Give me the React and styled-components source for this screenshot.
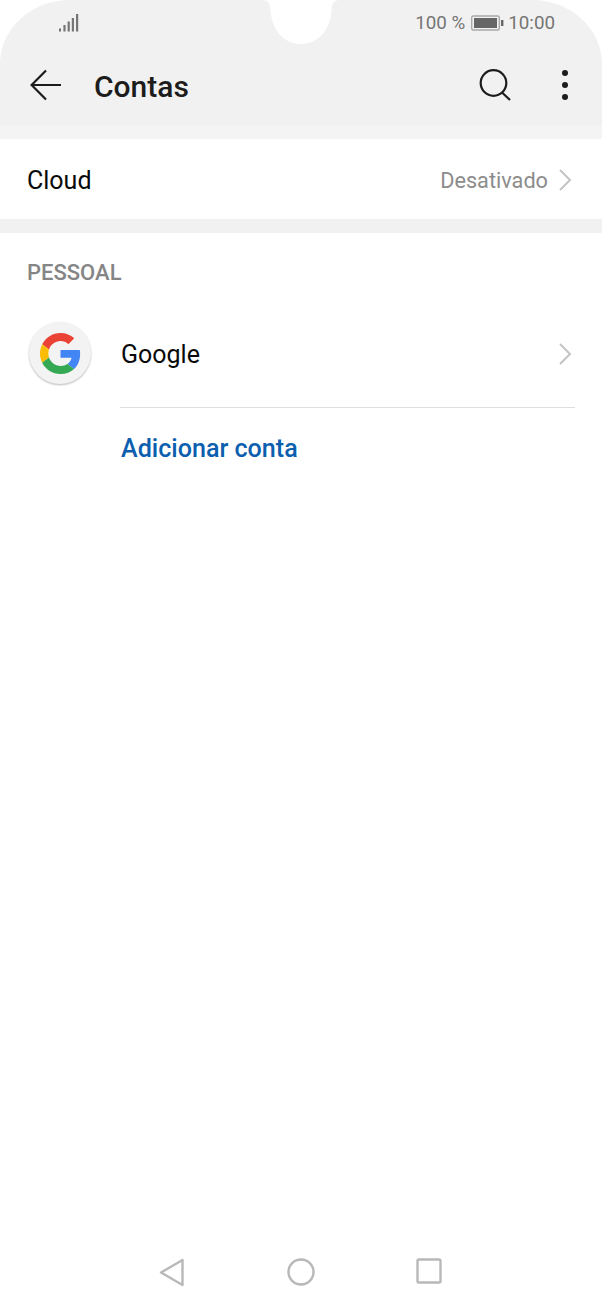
import React from "react";
import styled, { createGlobalStyle } from "styled-components";

const Global = createGlobalStyle`
  html, body { margin: 0; padding: 0; background: #fff; }
  body { font-family: Roboto, "Noto Sans", sans-serif; }
  * { box-sizing: border-box; }
`;
const Screen = styled.div`
  position: relative; width: 602px; height: 1306px; background: #fff;
  display: flex; flex-direction: column; overflow: hidden;
`;
const Header = styled.header`
  background: #f1f1f1; height: 125px; border-radius: 70px 70px 0 0 / 64px 64px 0 0;
  display: flex; flex-direction: column;
`;
const StatusBar = styled.div`
  height: 44px; display: flex; align-items: center; justify-content: space-between;
  padding: 1px 47px 0 59px; color: #757575; font-size: 18.8px;
`;
const StatusRight = styled.div` display: flex; align-items: center; gap: 6px; `;
const Battery = styled.svg` margin-right: -2px; `;
const Notch = styled.svg` position: absolute; left: 262px; top: 0; `;
const Toolbar = styled.div`
  flex: 1; display: flex; align-items: center; padding: 4px 33px 0 30px;
`;
const Title = styled.h1`
  margin: 0 0 0 32px; flex: 1; font-size: 30px; font-weight: 500; color: #1c1c1c; line-height: 1;
`;
const BackIcon = styled.svg` margin-top: -4px; `;
const ToolIcons = styled.div` display: flex; align-items: center; gap: 50px; margin-top: -4px; `;
const Band = styled.div` height: 14px; background: ${p => p.$tone}; `;
const CloudRow = styled.div`
  height: 80px; display: flex; align-items: center; justify-content: space-between;
  padding: 2px 30px 0 27px; font-size: 25px; color: #0a0a0a;
`;
const RowEnd = styled.div` display: flex; align-items: center; gap: 10px; `;
const Muted = styled.span` color: #8c8c8c; font-size: 21.7px; `;
const SectionLabel = styled.div`
  padding: 28px 27px 0; font-size: 22px; font-weight: 500; color: #858585; line-height: 24px;
`;
const AccountRow = styled.div`
  margin-top: 19px; display: grid; grid-template-columns: 120px 1fr;
`;
const Avatar = styled.div`
  width: 62px; height: 62px; margin: 18px 0 0 29px; border-radius: 50%; background: #f3f3f3;
  box-shadow: 0 1px 2px rgba(0,0,0,.28); display: flex; align-items: center; justify-content: center;
`;
const AccountBody = styled.div`
  height: 104px; margin-right: 27px; padding: 0 3px 2px 1px; border-bottom: 1px solid #dedede;
  display: flex; align-items: center; justify-content: space-between;
  font-size: 25px; color: #0a0a0a;
`;
const AddLink = styled.a`
  display: block; margin: 26px 0 0 121px; font-size: 25.1px; font-weight: 500; line-height: 30px; color: #0b5fae;
`;
const NavBar = styled.nav`
  margin-top: auto; height: 66px; padding: 18px 160px 0 159px; display: flex; align-items: flex-start;
  justify-content: space-between;
`;
const ChevronIcon = styled.svg` margin-top: ${p => p.$lift || 0}px; `;

const Chevron = ({ lift }) => (
  <ChevronIcon $lift={lift} width="14" height="24" viewBox="0 0 14 24" fill="none">
    <path d="M2 2l10 10L2 22" stroke="#c4c4c4" strokeWidth="2" />
  </ChevronIcon>
);
const GoogleG = () => (
  <svg width="41" height="41" viewBox="0 0 48 48">
    <path fill="#EA4335" d="M24 9.5c3.54 0 6.71 1.22 9.21 3.6l6.85-6.85C35.9 2.38 30.47 0 24 0 14.62 0 6.51 5.38 2.56 13.22l7.98 6.19C12.43 13.72 17.74 9.5 24 9.5z" />
    <path fill="#4285F4" d="M46.98 24.55c0-1.57-.15-3.09-.38-4.55H24v9.02h12.94c-.58 2.96-2.26 5.48-4.78 7.18l7.73 6c4.51-4.18 7.09-10.36 7.09-17.65z" />
    <path fill="#FBBC05" d="M10.53 28.59c-.48-1.45-.76-2.99-.76-4.59s.27-3.14.76-4.59l-7.98-6.19C.92 16.46 0 20.12 0 24c0 3.88.92 7.54 2.56 10.78l7.97-6.19z" />
    <path fill="#34A853" d="M24 48c6.48 0 11.93-2.13 15.89-5.81l-7.73-6c-2.15 1.45-4.92 2.3-8.16 2.3-6.26 0-11.57-4.22-13.47-9.91l-7.98 6.19C6.51 42.62 14.62 48 24 48z" />
  </svg>
);

export default function App() {
  return (
    <Screen>
      <Global />
      <Header>
        <StatusBar>
          <svg width="20" height="18" viewBox="0 0 20 18" fill="#757575">
            <rect x="0" y="14.5" width="2" height="3" />
            <rect x="4.4" y="11" width="2.2" height="6.5" />
            <rect x="8.6" y="7.5" width="2.2" height="10" />
            <rect x="12.8" y="4" width="2.2" height="13.5" />
            <rect x="17" y="0" width="2.2" height="17.5" />
          </svg>
          <StatusRight>
            <span>100 %</span>
            <Battery width="33" height="16" viewBox="0 0 33 16">
              <rect x="0.7" y="1" width="27.6" height="14" rx="1.5" fill="none" stroke="#a8a8a8" strokeWidth="1.4" />
              <rect x="3" y="3" width="23" height="10" fill="#666" />
              <rect x="30" y="5" width="2.4" height="6" fill="#666" />
            </Battery>
            <span>10:00</span>
          </StatusRight>
        </StatusBar>
        <Toolbar>
          <BackIcon width="32" height="32" viewBox="0 0 32 32" fill="none" stroke="#1c1c1c" strokeWidth="2.2">
            <path d="M31 16H2M16 1.500L1.600 16 16 30.500" />
          </BackIcon>
          <Title>Contas</Title>
          <ToolIcons>
            <svg width="32" height="32" viewBox="0 0 32 32" fill="none" stroke="#1c1c1c" strokeWidth="2.2">
              <circle cx="14.500" cy="14" r="12.800" />
              <path d="M23 23.500l8 7.500" />
            </svg>
            <svg width="8" height="32" viewBox="0 0 8 32" fill="#1c1c1c">
              <circle cx="4" cy="4" r="3" />
              <circle cx="4" cy="16" r="3" />
              <circle cx="4" cy="28" r="3" />
            </svg>
          </ToolIcons>
        </Toolbar>
      </Header>
      <Notch width="78" height="46" viewBox="0 0 78 46">
        <path fill="#fff" d="M0 0C6 0 8 3 8.500 10C9.500 30 22 44 39 44C56 44 68.500 30 69.500 10C70 3 72 0 78 0Z" />
      </Notch>
      <Band $tone="#f4f4f4" />
      <CloudRow>
        <span>Cloud</span>
        <RowEnd>
          <Muted>Desativado</Muted>
          <Chevron />
        </RowEnd>
      </CloudRow>
      <Band $tone="#f1f1f1" />
      <SectionLabel>PESSOAL</SectionLabel>
      <AccountRow>
        <Avatar><GoogleG /></Avatar>
        <AccountBody>
          <span>Google</span>
          <Chevron lift={-2} />
        </AccountBody>
      </AccountRow>
      <AddLink>Adicionar conta</AddLink>
      <NavBar>
        <svg width="26" height="30" viewBox="0 0 26 30" fill="none" stroke="#b8b8b8" strokeWidth="2.4" strokeLinejoin="round">
          <path d="M23.500 2L2 14.500L23.500 27Z" />
        </svg>
        <svg width="28" height="28" viewBox="0 0 28 28" fill="none" stroke="#b8b8b8" strokeWidth="2.4">
          <circle cx="14" cy="14" r="12.500" />
        </svg>
        <svg width="26" height="26" viewBox="0 0 26 26" fill="none" stroke="#b8b8b8" strokeWidth="2.4" strokeLinejoin="round">
          <rect x="1.500" y="1.500" width="23" height="23" rx="1.500" />
        </svg>
      </NavBar>
    </Screen>
  );
}
